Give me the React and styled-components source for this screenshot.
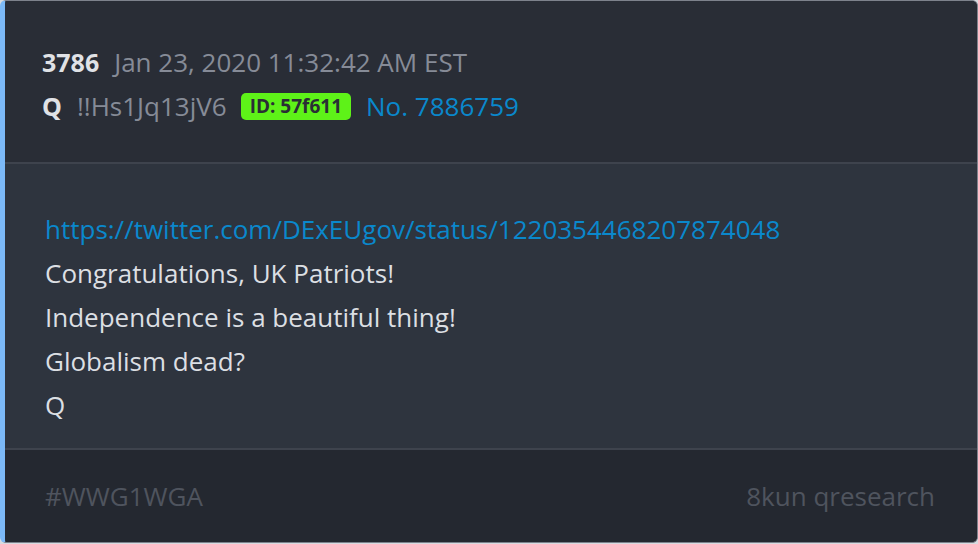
import React from 'react'
import styled, { createGlobalStyle } from 'styled-components'

const Global = createGlobalStyle`
	html, body {
		margin: 0;
		padding: 0;
		background: #d8dbe0;
	}
	body {
		font-family: "Open Sans", "Noto Sans", sans-serif;
	}
`

const Card = styled.article`
	box-sizing: border-box;
	width: 978px;
	height: 543px;
	display: flex;
	flex-direction: column;
	border: 1px solid #7d828c;
	border-left: 5px solid #7cb9f7;
	border-radius: 6px;
	overflow: hidden;
	background: #2e343e;
`

const Header = styled.header`
	background: #292d36;
	padding: 39px 0 0 37px;
	height: 122px;
	border-bottom: 2px solid #3e434d;
`

const Line = styled.div`
	display: flex;
	align-items: center;
	height: 44px;
	font-size: 26px;
	color: #868b97;
`

const Num = styled.span`
	font-weight: 700;
	font-size: 25px;
	color: #e0e2e6;
	margin-right: 15px;
`

const Badge = styled.span`
	display: inline-flex;
	align-items: center;
	height: 27px;
	padding: 0 9px;
	margin: 0 15px 0 14px;
	background: #5ef218;
	color: #2a2e35;
	font-size: 19px;
	font-weight: 700;
	border-radius: 5px;
`

const Link = styled.a`
	color: #0a88cc;
	text-decoration: none;
	font-size: 26px;
`

const Body = styled.section`
	flex: 1;
	padding: 43px 0 0 40px;
	border-bottom: 2px solid #3e434d;
`

const Text = styled.p`
	margin: 0;
	height: 44px;
	line-height: 44px;
	font-size: 26px;
	color: #dcdfe3;
`

const Footer = styled.footer`
	height: 92px;
	background: #242830;
	display: flex;
	align-items: center;
	justify-content: space-between;
	padding: 0 42px 0 40px;
	font-size: 26px;
	color: #4f545e;
`

export default function App() {
	return (
		<>
			<Global />
			<Card>
				<Header>
					<Line>
						<Num>3786</Num>
						<span>Jan 23, 2020 11:32:42 AM EST</span>
					</Line>
					<Line>
						<Num>Q</Num>
						<span>!!Hs1Jq13jV6</span>
						<Badge>ID: 57f611</Badge>
						<Link href="#">No. 7886759</Link>
					</Line>
				</Header>
				<Body>
					<Text>
						<Link href="#">https://twitter.com/DExEUgov/status/1220354468207874048</Link>
					</Text>
					<Text>Congratulations, UK Patriots!</Text>
					<Text>Independence is a beautiful thing!</Text>
					<Text>Globalism dead?</Text>
					<Text>Q</Text>
				</Body>
				<Footer>
					<span>#WWG1WGA</span>
					<span>8kun qresearch</span>
				</Footer>
			</Card>
		</>
	)
}
